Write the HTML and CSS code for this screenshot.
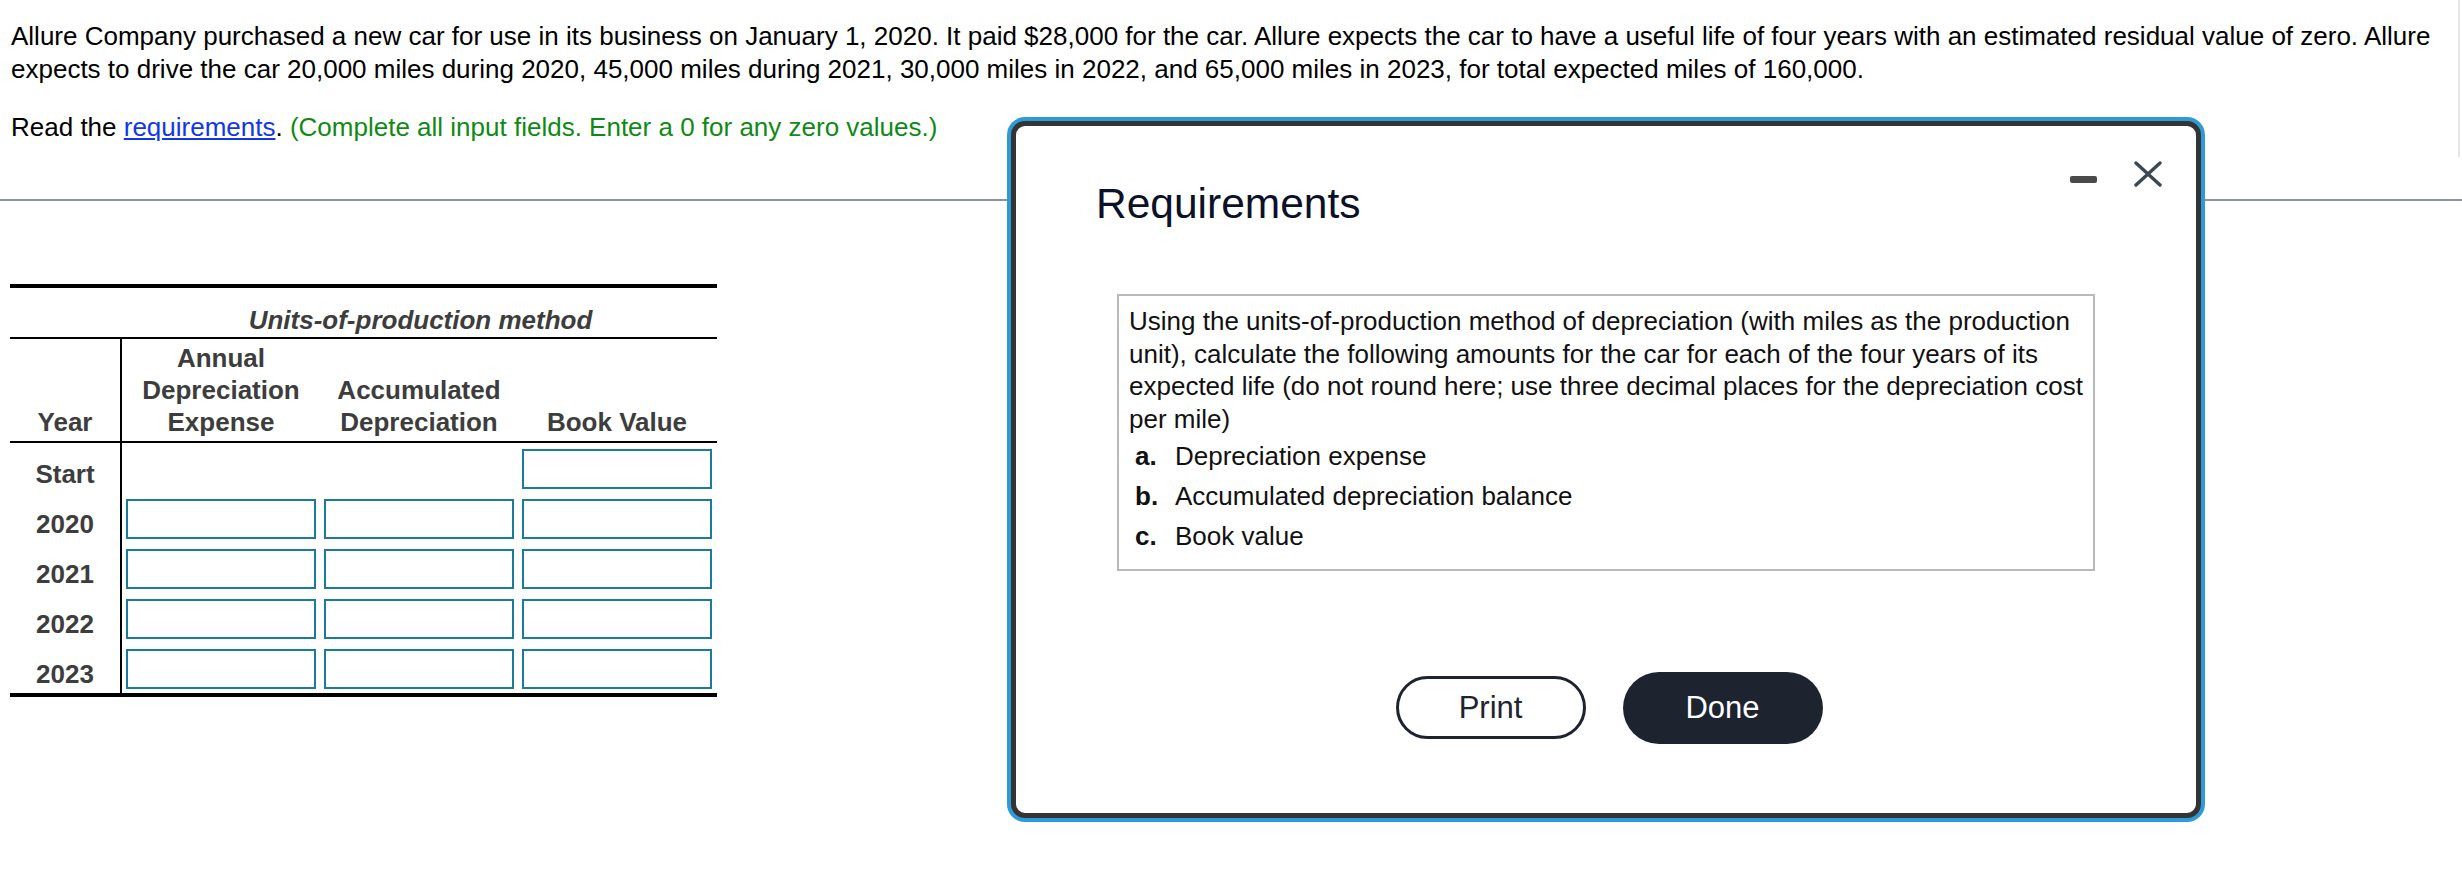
FILE: index.html
```html
<!DOCTYPE html>
<html lang="en">
<head>
<meta charset="utf-8">
<title>Units-of-production depreciation</title>
<link rel="stylesheet" href="styles.css">
</head>
<body>
<div class="page">
  <div class="question">
    <p class="stem">Allure Company purchased a new car for use in its business on January 1, 2020. It paid $28,000 for the car. Allure expects the car to have a useful life of four years with an estimated residual value of zero. Allure expects to drive the car 20,000 miles during 2020, 45,000 miles during 2021, 30,000 miles in 2022, and 65,000 miles in 2023, for total expected miles of 160,000.</p>
    <p class="instr">Read the <a class="link" href="#">requirements</a>. <span class="hint">(Complete all input fields. Enter a 0 for any zero values.)</span></p>
  </div>
  <div class="rule"></div>
  <div class="dep-table">
    <div class="t-title">Units-of-production method</div>
    <div class="t-head">
      <div class="c-year head-year">Year</div>
      <div class="c-cells head-cells">
        <div class="hcell">Annual<br>Depreciation<br>Expense</div>
        <div class="hcell">Accumulated<br>Depreciation</div>
        <div class="hcell">Book Value</div>
      </div>
    </div>
    <div class="t-row">
      <div class="c-year">Start</div>
      <div class="c-cells">
        <div class="blank"></div>
        <div class="blank"></div>
        <input class="inp" type="text">
      </div>
    </div>
    <div class="t-row">
      <div class="c-year">2020</div>
      <div class="c-cells">
        <input class="inp" type="text"><input class="inp" type="text"><input class="inp" type="text">
      </div>
    </div>
    <div class="t-row">
      <div class="c-year">2021</div>
      <div class="c-cells">
        <input class="inp" type="text"><input class="inp" type="text"><input class="inp" type="text">
      </div>
    </div>
    <div class="t-row">
      <div class="c-year">2022</div>
      <div class="c-cells">
        <input class="inp" type="text"><input class="inp" type="text"><input class="inp" type="text">
      </div>
    </div>
    <div class="t-row">
      <div class="c-year">2023</div>
      <div class="c-cells">
        <input class="inp" type="text"><input class="inp" type="text"><input class="inp" type="text">
      </div>
    </div>
  </div>
</div>

<div class="scroll-edge"></div>

<div class="modal">
  <div class="modal-head">
    <h2 class="modal-title">Requirements</h2>
    <div class="win-ctrls">
      <span class="minimize"></span>
      <svg class="close" width="28" height="26" viewBox="0 0 28 26" aria-hidden="true">
        <path d="M2 2 L26 24 M26 2 L2 24" stroke="#3b4753" stroke-width="3.4" stroke-linecap="round" fill="none"/>
      </svg>
    </div>
  </div>
  <div class="req-box">
    <p class="req-text">Using the units-of-production method of depreciation (with miles as the production unit), calculate the following amounts for the car for each of the four years of its expected life (do not round here; use three decimal places for the depreciation cost per mile)</p>
    <ul class="req-list">
      <li><span class="lbl">a.</span>Depreciation expense</li>
      <li><span class="lbl">b.</span>Accumulated depreciation balance</li>
      <li><span class="lbl">c.</span>Book value</li>
    </ul>
  </div>
  <div class="btn-row">
    <button class="btn btn-print" type="button">Print</button>
    <button class="btn btn-done" type="button">Done</button>
  </div>
</div>
</body>
</html>
```

FILE: styles.css
```css
html, body {
  margin: 0;
  padding: 0;
  background: #fff;
}

body {
  width: 2462px;
  height: 888px;
  overflow: hidden;
  position: relative;
  font-family: "Liberation Sans", Arial, Helvetica, sans-serif;
  font-size: 26px;
  color: #000;
}

.question {
  padding: 20px 15px 0 11px;
}

.stem {
  margin: 0 0 25px 0;
  line-height: 33px;
}

.instr {
  margin: 0;
  line-height: 33px;
}

.link {
  color: #1336ea;
  text-decoration: underline;
}

.hint {
  color: #0f8a14;
}

.rule {
  margin-top: 55px;
  height: 2px;
  background: #8c93a3;
}

/* ---------- table ---------- */
.dep-table {
  width: 707px;
  margin: 83px 0 0 10px;
  border-top: 4px solid #000;
  border-bottom: 4px solid #000;
  color: #3d3d3d;
  font-weight: bold;
}

.t-title {
  padding: 16px 0 1px 114px;
  line-height: 32px;
  text-align: center;
  font-style: italic;
  border-bottom: 2px solid #000;
}

.t-head {
  display: flex;
  border-bottom: 2px solid #000;
  height: 102px;
}

.c-year {
  width: 112px;
  flex: none;
  border-right: 2px solid #000;
  text-align: center;
  line-height: 32px;
}

.head-year {
  display: flex;
  align-items: flex-end;
  justify-content: center;
  padding-bottom: 3px;
  box-sizing: border-box;
}

.c-cells {
  display: flex;
  gap: 8px;
  padding-left: 4px;
}

.head-cells {
  align-items: flex-end;
  padding-bottom: 3px;
}

.hcell {
  width: 190px;
  text-align: center;
  line-height: 32px;
}

.t-row {
  display: flex;
  height: 50px;
}

.t-row .c-year {
  padding-top: 15px;
  box-sizing: border-box;
}

.t-row .c-cells {
  padding-top: 6px;
}

.blank {
  width: 190px;
  height: 40px;
}

.inp {
  width: 190px;
  height: 40px;
  box-sizing: border-box;
  border: 2px solid #1a7b9c;
  background: #fff;
  margin: 0;
  padding: 0;
  font: inherit;
}

.scroll-edge {
  position: absolute;
  right: 2px;
  top: 0;
  width: 2px;
  height: 157px;
  background: #e6e6e6;
}

/* ---------- modal ---------- */
.modal {
  position: absolute;
  left: 1011px;
  top: 121px;
  width: 1190px;
  height: 697px;
  box-sizing: border-box;
  border: 5px solid #343434;
  border-radius: 14px;
  box-shadow: 0 0 0 4px #2c9bd8;
  background: #fff;
  z-index: 5;
}

.modal-head {
  display: flex;
  justify-content: space-between;
  align-items: flex-start;
  padding: 0 34px 0 80px;
}

.modal-title {
  margin: 54px 0 0 0;
  font-size: 42.5px;
  line-height: 48px;
  font-weight: normal;
  color: #0b1128;
}

.win-ctrls {
  margin-top: 35px;
  display: flex;
  align-items: flex-start;
  gap: 37px;
}

.minimize {
  display: block;
  width: 27px;
  height: 7px;
  margin-top: 15px;
  border-radius: 2px;
  background: #4a4a4a;
}

.close {
  display: block;
}

.req-box {
  margin: 66px 101px 0 101px;
  border: 2px solid #b9b9b9;
  padding: 9px 0 16px 10px;
  color: #111;
}

.req-text {
  margin: 0;
  line-height: 32.5px;
}

.req-list {
  list-style: none;
  margin: 5px 0 0 6px;
  padding: 0;
}

.req-list li {
  line-height: 32.5px;
  margin-bottom: 7.5px;
}

.req-list li:last-child {
  margin-bottom: 0;
}

.lbl {
  display: inline-block;
  width: 40px;
  font-weight: bold;
}

.btn-row {
  margin-top: 101px;
  display: flex;
  justify-content: center;
  align-items: center;
  gap: 37px;
  padding-left: 6px;
}

.btn {
  font-family: "Liberation Sans", Arial, Helvetica, sans-serif;
  font-size: 31px;
  box-sizing: border-box;
  margin: 0;
  padding: 0;
  cursor: pointer;
}

.btn-print {
  width: 190px;
  height: 63px;
  border: 3px solid #1e2330;
  border-radius: 32px;
  background: #fff;
  color: #1e2330;
}

.btn-done {
  width: 200px;
  height: 72px;
  border: none;
  border-radius: 36px;
  background: #1e2330;
  color: #fff;
}
```
